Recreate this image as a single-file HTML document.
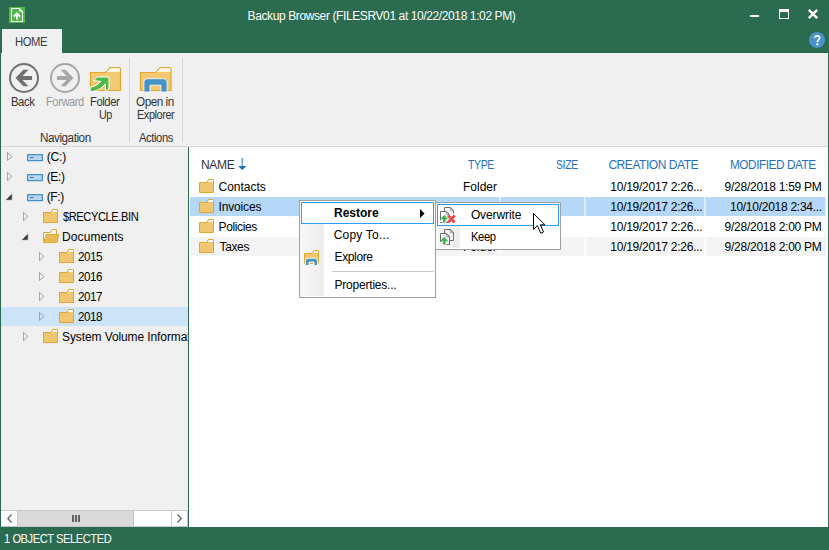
<!DOCTYPE html>
<html><head><meta charset="utf-8">
<style>
*{box-sizing:border-box}
html,body{margin:0;padding:0}
body{width:829px;height:550px;overflow:hidden;position:relative;background:#2b6b4f;font-family:"Liberation Sans",sans-serif;font-size:12px;color:#000}
.a{position:absolute}
.t{position:absolute;white-space:nowrap;line-height:14px}
svg{position:absolute;overflow:visible}
</style></head><body>

<!-- title bar -->
<div class="a" style="left:0;top:0;width:829px;height:53px;background:#2b6b4f"></div>
<!-- app icon -->
<svg style="left:9px;top:7px" width="16" height="16" viewBox="0 0 16 16">
  <rect x="0" y="0" width="16" height="16" fill="#4fb84b"/>
  <path d="M2.5 1.5 H10.3 L13.5 4.7 V14.5 H2.5 Z" fill="none" stroke="#fff" stroke-width="1.1"/>
  <path d="M10.2 1.5 V4.8 H13.5 Z" fill="#fff"/>
  <path d="M4.8 9.6 L7.9 6.3 L11 9.6" fill="none" stroke="#fff" stroke-width="1.9"/>
  <rect x="7" y="7" width="1.8" height="5.6" fill="#fff"/>
</svg>
<div class="t" style="left:247.60px;top:9px;font-size:12px;letter-spacing:-0.391px;color:#fff">Backup Browser (FILESRV01 at 10/22/2018 1:02 PM)</div>

<!-- window controls -->
<div class="a" style="left:750px;top:15px;width:9px;height:2px;background:#fff"></div>
<div class="a" style="left:779px;top:9px;width:10px;height:10px;border:1px solid #fff;border-top-width:3px"></div>
<svg style="left:808px;top:9px" width="10" height="10" viewBox="0 0 10 10">
  <path d="M0.8 0.8 L9.2 9.2 M9.2 0.8 L0.8 9.2" stroke="#fff" stroke-width="2.4"/>
</svg>

<!-- HOME tab -->
<div class="a" style="left:2px;top:29px;width:60px;height:25px;background:#f0f0f0"></div>
<div class="t" style="left:15.46px;top:35px;font-size:12px;letter-spacing:-0.450px;transform:scaleX(0.9361);transform-origin:0 0;color:#3a3a4a">HOME</div>

<!-- help -->
<svg style="left:809px;top:32px" width="16" height="16" viewBox="0 0 16 16">
  <circle cx="8" cy="8" r="8" fill="#4a93c9"/>
  <path d="M5.8 5.8 C5.8 3.2 10.6 3.2 10.6 5.8 C10.6 7.8 8.3 8 8.3 10.3" fill="none" stroke="#fff" stroke-width="1.7"/>
  <rect x="7.3" y="11.4" width="2" height="2" fill="#fff"/>
</svg>

<!-- ribbon -->
<div class="a" style="left:1px;top:53px;width:827px;height:94px;background:#f0f0f0;border-bottom:1px solid #d6d6d6"></div>
<!-- back -->
<svg style="left:0;top:0" width="829" height="150">
  <circle cx="24" cy="78" r="14" fill="none" stroke="#6f6f6f" stroke-width="2"/>
  <path d="M15.5 78 L23.4 69.8 H28.5 L22.5 76 H32 V80 H22.5 L28.5 86.2 H23.4 Z" fill="#707070"/>
  <circle cx="65" cy="78" r="14" fill="none" stroke="#a6a6a6" stroke-width="2"/>
  <path d="M73.5 78 L65.6 69.8 H60.5 L66.5 76 H57 V80 H66.5 L60.5 86.2 H65.6 Z" fill="#a8a8a8"/>
  <!-- folder up -->
  <path d="M90.5 72.5 H105.5 L110 67.5 H119 Q120.5 67.5 120.5 69 V90.5 H90.5 Z" fill="#f2c872" stroke="#e0a630" stroke-width="1.2"/>
  <path d="M106.5 71.8 L110.5 68.3 H119.8 V71.8 Z" fill="#fff"/>
  <path d="M93.6 80.6 L97.4 77 H109 V88.5 L105.4 91.6 V83.8 C101 89 96 91.5 90.2 91.6 V87.2 C95 86.5 98.5 84.5 100.8 81.4 Z" fill="#4cb847" stroke="#fff" stroke-width="1"/>
  <!-- open in explorer -->
  <path d="M140.5 72.5 H155.6 L160.3 67.5 H169.5 Q171 67.5 171 69 V90.5 H140.5 Z" fill="#f2c872" stroke="#e0a630" stroke-width="1.2"/>
  <path d="M156.5 71.8 L160.8 68.3 H170.3 V71.8 Z" fill="#fff"/>
  <path d="M143.9 92 V82 Q143.9 78.7 147.5 78.7 H163.5 Q167.1 78.7 167.1 82 V92 H160.9 V85.2 H150 V92 Z" fill="#4593c6" stroke="#fff" stroke-width="0.8"/>
</svg>
<div class="t" style="left:10.86px;top:95px;font-size:12px;letter-spacing:-0.450px;transform:scaleX(0.9412);transform-origin:0 0;color:#333">Back</div>
<div class="t" style="left:45.57px;top:95px;font-size:12px;letter-spacing:-0.450px;transform:scaleX(0.9262);transform-origin:0 0;color:#999">Forward</div>
<div class="t" style="left:90.06px;top:95px;font-size:12px;letter-spacing:-0.450px;transform:scaleX(0.9366);transform-origin:0 0;color:#333">Folder</div>
<div class="t" style="left:99.01px;top:108px;font-size:12px;letter-spacing:-0.450px;transform:scaleX(0.8930);transform-origin:0 0;color:#333">Up</div>
<div class="t" style="left:136.03px;top:95px;font-size:12px;letter-spacing:-0.450px;transform:scaleX(0.9732);transform-origin:0 0;color:#333">Open in</div>
<div class="t" style="left:136.59px;top:108px;font-size:12px;letter-spacing:-0.450px;transform:scaleX(0.9082);transform-origin:0 0;color:#333">Explorer</div>
<div class="t" style="left:39.53px;top:131px;font-size:12px;letter-spacing:-0.450px;transform:scaleX(0.9715);transform-origin:0 0;color:#333">Navigation</div>
<div class="t" style="left:139.00px;top:131px;font-size:12px;letter-spacing:-0.450px;transform:scaleX(0.9366);transform-origin:0 0;color:#333">Actions</div>
<div class="a" style="left:129px;top:58px;width:1px;height:84px;background:#d8d8d8"></div>
<div class="a" style="left:182px;top:58px;width:1px;height:84px;background:#d8d8d8"></div>

<!-- left frame border -->
<div class="a" style="left:0;top:53px;width:1px;height:474px;background:#2b6b4f"></div>
<div class="a" style="left:828px;top:53px;width:1px;height:474px;background:#2b6b4f"></div>

<!-- tree pane -->
<div class="a" style="left:1px;top:147px;width:187px;height:380px;background:#f0f0f0"></div>
<div class="a" style="left:188px;top:147px;width:1px;height:380px;background:#2b6b4f"></div>

<!-- list pane -->
<div class="a" style="left:189px;top:147px;width:639px;height:380px;background:#fff"></div>

<!-- tree rows -->
<div class="a" style="left:1px;top:307px;width:187px;height:19px;background:#cde4f8"></div>
<div class="a" style="left:1px;top:147px;width:187px;height:363px;overflow:hidden">
<svg style="left:6px;top:5px" width="6" height="9" viewBox="0 0 6 9"><path d="M0.5 0.5 L5 4.5 L0.5 8.5 Z" fill="none" stroke="#a3a3a3" stroke-width="1"/></svg>
<svg style="left:26px;top:7px" width="16" height="8" viewBox="0 0 16 8"><rect x="0.6" y="0.6" width="14.8" height="6" fill="#bad5ee" stroke="#3e8fca" stroke-width="1.2"/><rect x="3" y="3" width="3.5" height="1" fill="#3a6e9c"/></svg>
<div class="t" style="left:45.70px;top:3px;font-size:12px;letter-spacing:-0.167px">(C:)</div>
<svg style="left:6px;top:25px" width="6" height="9" viewBox="0 0 6 9"><path d="M0.5 0.5 L5 4.5 L0.5 8.5 Z" fill="none" stroke="#a3a3a3" stroke-width="1"/></svg>
<svg style="left:26px;top:27px" width="16" height="8" viewBox="0 0 16 8"><rect x="0.6" y="0.6" width="14.8" height="6" fill="#bad5ee" stroke="#3e8fca" stroke-width="1.2"/><rect x="3" y="3" width="3.5" height="1" fill="#3a6e9c"/></svg>
<div class="t" style="left:45.70px;top:23px;font-size:12px;letter-spacing:-0.367px">(E:)</div>
<svg style="left:5px;top:47px" width="6" height="6" viewBox="0 0 6 6"><path d="M0.3 5.7 L5.7 0.3 V5.7 Z" fill="#3a3a3a" stroke="#555" stroke-width="0.6"/></svg>
<svg style="left:26px;top:47px" width="16" height="8" viewBox="0 0 16 8"><rect x="0.6" y="0.6" width="14.8" height="6" fill="#bad5ee" stroke="#3e8fca" stroke-width="1.2"/><rect x="3" y="3" width="3.5" height="1" fill="#3a6e9c"/></svg>
<div class="t" style="left:45.70px;top:43px;font-size:12px;letter-spacing:-0.367px">(F:)</div>
<svg style="left:22px;top:65px" width="6" height="9" viewBox="0 0 6 9"><path d="M0.5 0.5 L5 4.5 L0.5 8.5 Z" fill="none" stroke="#a3a3a3" stroke-width="1"/></svg>
<svg style="left:42px;top:62px" width="16" height="16" viewBox="0 0 16 16"><path d="M0.5 3.5 H8 L9.5 0.5 H14 Q14.5 0.5 14.5 1 V13.5 H0.5 Z" fill="#f0c670" stroke="#e0a630" stroke-width="1"/><path d="M8.9 3 L10.1 1 H14 V3 Z" fill="#fff"/></svg>
<div class="t" style="left:62.00px;top:63px;font-size:12px;letter-spacing:-0.450px;transform:scaleX(0.9254);transform-origin:0 0">$RECYCLE.BIN</div>
<svg style="left:21px;top:87px" width="6" height="6" viewBox="0 0 6 6"><path d="M0.3 5.7 L5.7 0.3 V5.7 Z" fill="#3a3a3a" stroke="#555" stroke-width="0.6"/></svg>
<svg style="left:42px;top:82px" width="16" height="16" viewBox="0 0 16 16"><path d="M0.5 13.5 V3.5 H7.5 L9 0.5 H13.5 V5.5" fill="#fff" stroke="#e0a630" stroke-width="1"/><path d="M3.2 5.5 H15.6 L14 13.5 H0.8 Z" fill="#e9b955" stroke="#e0a630" stroke-width="1"/></svg>
<div class="t" style="left:61.00px;top:83px;font-size:12px;letter-spacing:0.113px">Documents</div>
<svg style="left:38px;top:105px" width="6" height="9" viewBox="0 0 6 9"><path d="M0.5 0.5 L5 4.5 L0.5 8.5 Z" fill="none" stroke="#a3a3a3" stroke-width="1"/></svg>
<svg style="left:58px;top:102px" width="16" height="16" viewBox="0 0 16 16"><path d="M0.5 3.5 H8 L9.5 0.5 H14 Q14.5 0.5 14.5 1 V13.5 H0.5 Z" fill="#f0c670" stroke="#e0a630" stroke-width="1"/><path d="M8.9 3 L10.1 1 H14 V3 Z" fill="#fff"/></svg>
<div class="t" style="left:77.43px;top:103px;font-size:12px;letter-spacing:-0.450px;transform:scaleX(0.9683);transform-origin:0 0">2015</div>
<svg style="left:38px;top:125px" width="6" height="9" viewBox="0 0 6 9"><path d="M0.5 0.5 L5 4.5 L0.5 8.5 Z" fill="none" stroke="#a3a3a3" stroke-width="1"/></svg>
<svg style="left:58px;top:122px" width="16" height="16" viewBox="0 0 16 16"><path d="M0.5 3.5 H8 L9.5 0.5 H14 Q14.5 0.5 14.5 1 V13.5 H0.5 Z" fill="#f0c670" stroke="#e0a630" stroke-width="1"/><path d="M8.9 3 L10.1 1 H14 V3 Z" fill="#fff"/></svg>
<div class="t" style="left:77.43px;top:123px;font-size:12px;letter-spacing:-0.450px;transform:scaleX(0.9683);transform-origin:0 0">2016</div>
<svg style="left:38px;top:145px" width="6" height="9" viewBox="0 0 6 9"><path d="M0.5 0.5 L5 4.5 L0.5 8.5 Z" fill="none" stroke="#a3a3a3" stroke-width="1"/></svg>
<svg style="left:58px;top:142px" width="16" height="16" viewBox="0 0 16 16"><path d="M0.5 3.5 H8 L9.5 0.5 H14 Q14.5 0.5 14.5 1 V13.5 H0.5 Z" fill="#f0c670" stroke="#e0a630" stroke-width="1"/><path d="M8.9 3 L10.1 1 H14 V3 Z" fill="#fff"/></svg>
<div class="t" style="left:77.43px;top:143px;font-size:12px;letter-spacing:-0.450px;transform:scaleX(0.9683);transform-origin:0 0">2017</div>
<svg style="left:38px;top:165px" width="6" height="9" viewBox="0 0 6 9"><path d="M0.5 0.5 L5 4.5 L0.5 8.5 Z" fill="none" stroke="#a3a3a3" stroke-width="1"/></svg>
<svg style="left:58px;top:162px" width="16" height="16" viewBox="0 0 16 16"><path d="M0.5 3.5 H8 L9.5 0.5 H14 Q14.5 0.5 14.5 1 V13.5 H0.5 Z" fill="#f0c670" stroke="#e0a630" stroke-width="1"/><path d="M8.9 3 L10.1 1 H14 V3 Z" fill="#fff"/></svg>
<div class="t" style="left:77.43px;top:163px;font-size:12px;letter-spacing:-0.450px;transform:scaleX(0.9683);transform-origin:0 0">2018</div>
<svg style="left:22px;top:185px" width="6" height="9" viewBox="0 0 6 9"><path d="M0.5 0.5 L5 4.5 L0.5 8.5 Z" fill="none" stroke="#a3a3a3" stroke-width="1"/></svg>
<svg style="left:42px;top:182px" width="16" height="16" viewBox="0 0 16 16"><path d="M0.5 3.5 H8 L9.5 0.5 H14 Q14.5 0.5 14.5 1 V13.5 H0.5 Z" fill="#f0c670" stroke="#e0a630" stroke-width="1"/><path d="M8.9 3 L10.1 1 H14 V3 Z" fill="#fff"/></svg>
<div class="t" style="left:61.00px;top:183px;font-size:12px;letter-spacing:-0.100px">System Volume Information</div>
</div>
<!-- tree scrollbar -->
<div class="a" style="left:1px;top:510px;width:187px;height:17px;background:#fff;border:1px solid #c8c8c8;border-left:0"></div>
<div class="a" style="left:17px;top:510px;width:1px;height:17px;background:#c8c8c8"></div>
<div class="a" style="left:18px;top:511px;width:116px;height:15px;background:#dadada;border-right:1px solid #c2c2c2"></div>
<div class="a" style="left:171px;top:510px;width:1px;height:17px;background:#c8c8c8"></div>
<div class="a" style="left:72px;top:515px;width:2px;height:7px;background:#606060"></div>
<div class="a" style="left:75px;top:515px;width:2px;height:7px;background:#606060"></div>
<div class="a" style="left:78px;top:515px;width:2px;height:7px;background:#606060"></div>
<svg style="left:7px;top:514px" width="5" height="9" viewBox="0 0 5 9"><path d="M4.5 0.5 L0.8 4.5 L4.5 8.5" fill="none" stroke="#606060" stroke-width="1.2"/></svg>
<svg style="left:177px;top:514px" width="5" height="9" viewBox="0 0 5 9"><path d="M0.5 0.5 L4.2 4.5 L0.5 8.5" fill="none" stroke="#606060" stroke-width="1.2"/></svg>

<!-- list -->
<div class="a" style="left:189px;top:146px;width:639px;height:1px;background:#d6d6d6"></div>
<div class="t" style="left:200.90px;top:158px;font-size:12px;letter-spacing:-0.267px;color:#333">NAME</div>
<svg style="left:238px;top:158px" width="9" height="12" viewBox="0 0 9 12"><rect x="3.5" y="0" width="1.6" height="8.5" fill="#6ca5dc"/><path d="M0 8 H8.5 L4.3 12 Z" fill="#1a6fc2"/></svg>
<div class="t" style="left:468.00px;top:158px;font-size:12px;letter-spacing:-0.450px;transform:scaleX(0.8769);transform-origin:0 0;color:#1f70c1">TYPE</div>
<div class="t" style="left:555.82px;top:158px;font-size:12px;letter-spacing:-0.450px;transform:scaleX(0.8753);transform-origin:0 0;color:#1f70c1">SIZE</div>
<div class="t" style="left:608.40px;top:158px;font-size:12px;letter-spacing:-0.450px;color:#1f70c1">CREATION DATE</div>
<div class="t" style="left:729.52px;top:158px;font-size:12px;letter-spacing:-0.450px;transform:scaleX(0.9815);transform-origin:0 0;color:#1f70c1">MODIFIED DATE</div>

<div class="a" style="left:825px;top:153px;width:1px;height:104px;background:#f0f0f0"></div>
<!-- row backgrounds -->
<div class="a" style="left:190px;top:197px;width:635px;height:19px;background:#b5d7f8"></div>
<div class="a" style="left:499px;top:197px;width:2px;height:19px;background:#dcebfa"></div>
<div class="a" style="left:584px;top:197px;width:2px;height:19px;background:#dcebfa"></div>
<div class="a" style="left:704px;top:197px;width:2px;height:19px;background:#dcebfa"></div>
<div class="a" style="left:190px;top:237px;width:635px;height:19px;background:#f4f4f4"></div>
<div class="a" style="left:499px;top:237px;width:2px;height:19px;background:#fafafa"></div>
<div class="a" style="left:584px;top:237px;width:2px;height:19px;background:#fafafa"></div>
<div class="a" style="left:704px;top:237px;width:2px;height:19px;background:#fafafa"></div>
<svg style="left:199px;top:179px" width="16" height="16" viewBox="0 0 16 16"><path d="M0.5 3.5 H8 L9.5 0.5 H14 Q14.5 0.5 14.5 1 V13.5 H0.5 Z" fill="#f0c670" stroke="#e0a630" stroke-width="1"/><path d="M8.9 3 L10.1 1 H14 V3 Z" fill="#fff"/></svg>
<div class="t" style="left:218.50px;top:180px;font-size:12px;letter-spacing:0.000px">Contacts</div>
<div class="t" style="left:463.00px;top:180px;font-size:12px;letter-spacing:0.000px">Folder</div>
<div class="t" style="left:610.30px;top:180px;font-size:12px;letter-spacing:-0.259px">10/19/2017 2:26...</div>
<div class="t" style="left:724.60px;top:180px;font-size:12px;letter-spacing:-0.263px">9/28/2018 1:59 PM</div>
<svg style="left:199px;top:199px" width="16" height="16" viewBox="0 0 16 16"><path d="M0.5 3.5 H8 L9.5 0.5 H14 Q14.5 0.5 14.5 1 V13.5 H0.5 Z" fill="#f0c670" stroke="#e0a630" stroke-width="1"/><path d="M8.9 3 L10.1 1 H14 V3 Z" fill="#fff"/></svg>
<div class="t" style="left:218.50px;top:200px;font-size:12px;letter-spacing:-0.157px">Invoices</div>
<div class="t" style="left:463.00px;top:200px;font-size:12px;letter-spacing:0.000px">Folder</div>
<div class="t" style="left:610.30px;top:200px;font-size:12px;letter-spacing:-0.259px">10/19/2017 2:26...</div>
<div class="t" style="left:730.00px;top:200px;font-size:12px;letter-spacing:-0.271px">10/10/2018 2:34...</div>
<svg style="left:199px;top:219px" width="16" height="16" viewBox="0 0 16 16"><path d="M0.5 3.5 H8 L9.5 0.5 H14 Q14.5 0.5 14.5 1 V13.5 H0.5 Z" fill="#f0c670" stroke="#e0a630" stroke-width="1"/><path d="M8.9 3 L10.1 1 H14 V3 Z" fill="#fff"/></svg>
<div class="t" style="left:218.50px;top:220px;font-size:12px;letter-spacing:-0.367px">Policies</div>
<div class="t" style="left:463.00px;top:220px;font-size:12px;letter-spacing:0.000px">Folder</div>
<div class="t" style="left:610.30px;top:220px;font-size:12px;letter-spacing:-0.259px">10/19/2017 2:26...</div>
<div class="t" style="left:724.60px;top:220px;font-size:12px;letter-spacing:-0.263px">9/28/2018 2:00 PM</div>
<svg style="left:199px;top:239px" width="16" height="16" viewBox="0 0 16 16"><path d="M0.5 3.5 H8 L9.5 0.5 H14 Q14.5 0.5 14.5 1 V13.5 H0.5 Z" fill="#f0c670" stroke="#e0a630" stroke-width="1"/><path d="M8.9 3 L10.1 1 H14 V3 Z" fill="#fff"/></svg>
<div class="t" style="left:219.50px;top:240px;font-size:12px;letter-spacing:-0.367px">Taxes</div>
<div class="t" style="left:463.00px;top:240px;font-size:12px;letter-spacing:0.000px">Folder</div>
<div class="t" style="left:610.30px;top:240px;font-size:12px;letter-spacing:-0.259px">10/19/2017 2:26...</div>
<div class="t" style="left:724.60px;top:240px;font-size:12px;letter-spacing:-0.263px">9/28/2018 2:00 PM</div>

<!-- context menu -->
<div class="a" style="left:299px;top:200px;width:137px;height:98px;background:#fff;border:1px solid #a0a0a0"></div>
<div class="a" style="left:300px;top:224px;width:24px;height:72px;background:linear-gradient(to right,#f8f8f8,#eeeeee)"></div>
<div class="a" style="left:301px;top:202px;width:133px;height:22px;border:1px solid #3399ff;background:#fff"></div>
<div class="t" style="left:334.00px;top:206px;font-size:12px;letter-spacing:0.000px;font-weight:bold">Restore</div>
<svg style="left:420px;top:209px" width="5" height="9" viewBox="0 0 5 9"><path d="M0 0 L4.5 4.5 L0 9 Z" fill="#000"/></svg>
<div class="t" style="left:333.70px;top:228px;font-size:12px;letter-spacing:0.200px">Copy To...</div>
<svg style="left:300px;top:246px" width="24" height="24" viewBox="0 0 24 24"><path d="M4.5 17.5 V7.5 H12.2 L14 4.5 H18.5 V17.5" fill="#f2c872" stroke="#e2a733" stroke-width="1"/><path d="M13 7 L14.3 5.2 H18 V7 Z" fill="#fff"/><path d="M5.5 19.5 V15 Q5.5 12.3 8.2 12.3 H14.5 Q17.5 12.3 17.5 15 V19.5 H14 V16 H9 V19.5 Z" fill="#4593c6" stroke="#fff" stroke-width="0.8"/><rect x="10" y="17" width="3" height="1" fill="#e2a733"/></svg>
<div class="t" style="left:334.50px;top:250px;font-size:12px;letter-spacing:-0.367px">Explore</div>
<div class="a" style="left:332px;top:271px;width:102px;height:1px;background:#c8c8c8"></div>
<div class="t" style="left:334.50px;top:278px;font-size:12px;letter-spacing:-0.208px">Properties...</div>

<!-- submenu -->
<div class="a" style="left:435px;top:202px;width:126px;height:48px;background:#fff;border:1px solid #a0a0a0"></div>
<div class="a" style="left:437px;top:226px;width:23px;height:22px;background:linear-gradient(to right,#f8f8f8,#eeeeee)"></div>
<div class="a" style="left:437px;top:204px;width:122px;height:22px;border:1px solid #3399ff;background:#fff"></div>
<svg style="left:437px;top:204px" width="22" height="44" viewBox="0 0 22 44">
 <g fill="none" stroke="#6e6e6e" stroke-width="1">
  <path d="M7.5 7 V3.5 H13.6 L16.5 6.4 V9.5"/>
  <path d="M3.5 16 V7.5 H9.6 L12.5 10.4 V11"/>
  <path d="M3 18.5 H5.5 M9 18.5 H11"/>
  <path d="M7.5 29 V25.5 H13.6 L16.5 28.4 V36.5 H13"/>
  <path d="M3.5 38 V29.5 H9.6 L12.5 32.4 V40.5 H9.5"/>
 </g>
 <path d="M13.3 4 L16 6.7 H13.3 Z M9.3 8 L12 10.7 H9.3 Z M13.3 26 L16 28.7 H13.3 Z M9.3 30 L12 32.7 H9.3 Z" fill="#fff" stroke="#6e6e6e" stroke-width="0.6"/>
 <path d="M7.2 11 L11.3 15.3 H8.5 V18.6 H6 V15.3 H3.1 Z" fill="#3fb24a"/>
 <path d="M11 11.5 L17.8 18.5 M17.8 11.5 L11 18.5" stroke="#e64f50" stroke-width="2.8"/>
 <path d="M7.2 33 L11.3 37.3 H8.5 V40.6 H6 V37.3 H3.1 Z" fill="#3fb24a"/>
</svg>
<div class="t" style="left:470.90px;top:208px;font-size:12px;letter-spacing:-0.112px">Overwrite</div>
<div class="t" style="left:470.96px;top:230px;font-size:12px;letter-spacing:-0.450px;transform:scaleX(0.9396);transform-origin:0 0">Keep</div>

<!-- cursor -->
<svg style="left:528px;top:208px" width="20" height="28" viewBox="0 0 20 28">
 <path d="M5.5 5.5 V21.5 L9.3 17.5 L12.8 25.3 L15.5 24 L12.3 16.8 H17 Z" fill="#fff" stroke="#000" stroke-width="1" stroke-linejoin="miter"/>
</svg>

<!-- status bar -->
<div class="a" style="left:0;top:527px;width:829px;height:23px;background:#2b6b4f"></div>
<div class="t" style="left:3.98px;top:532px;font-size:12px;letter-spacing:-0.450px;transform:scaleX(0.9231);transform-origin:0 0;color:#fff">1 OBJECT SELECTED</div>

</body></html>
